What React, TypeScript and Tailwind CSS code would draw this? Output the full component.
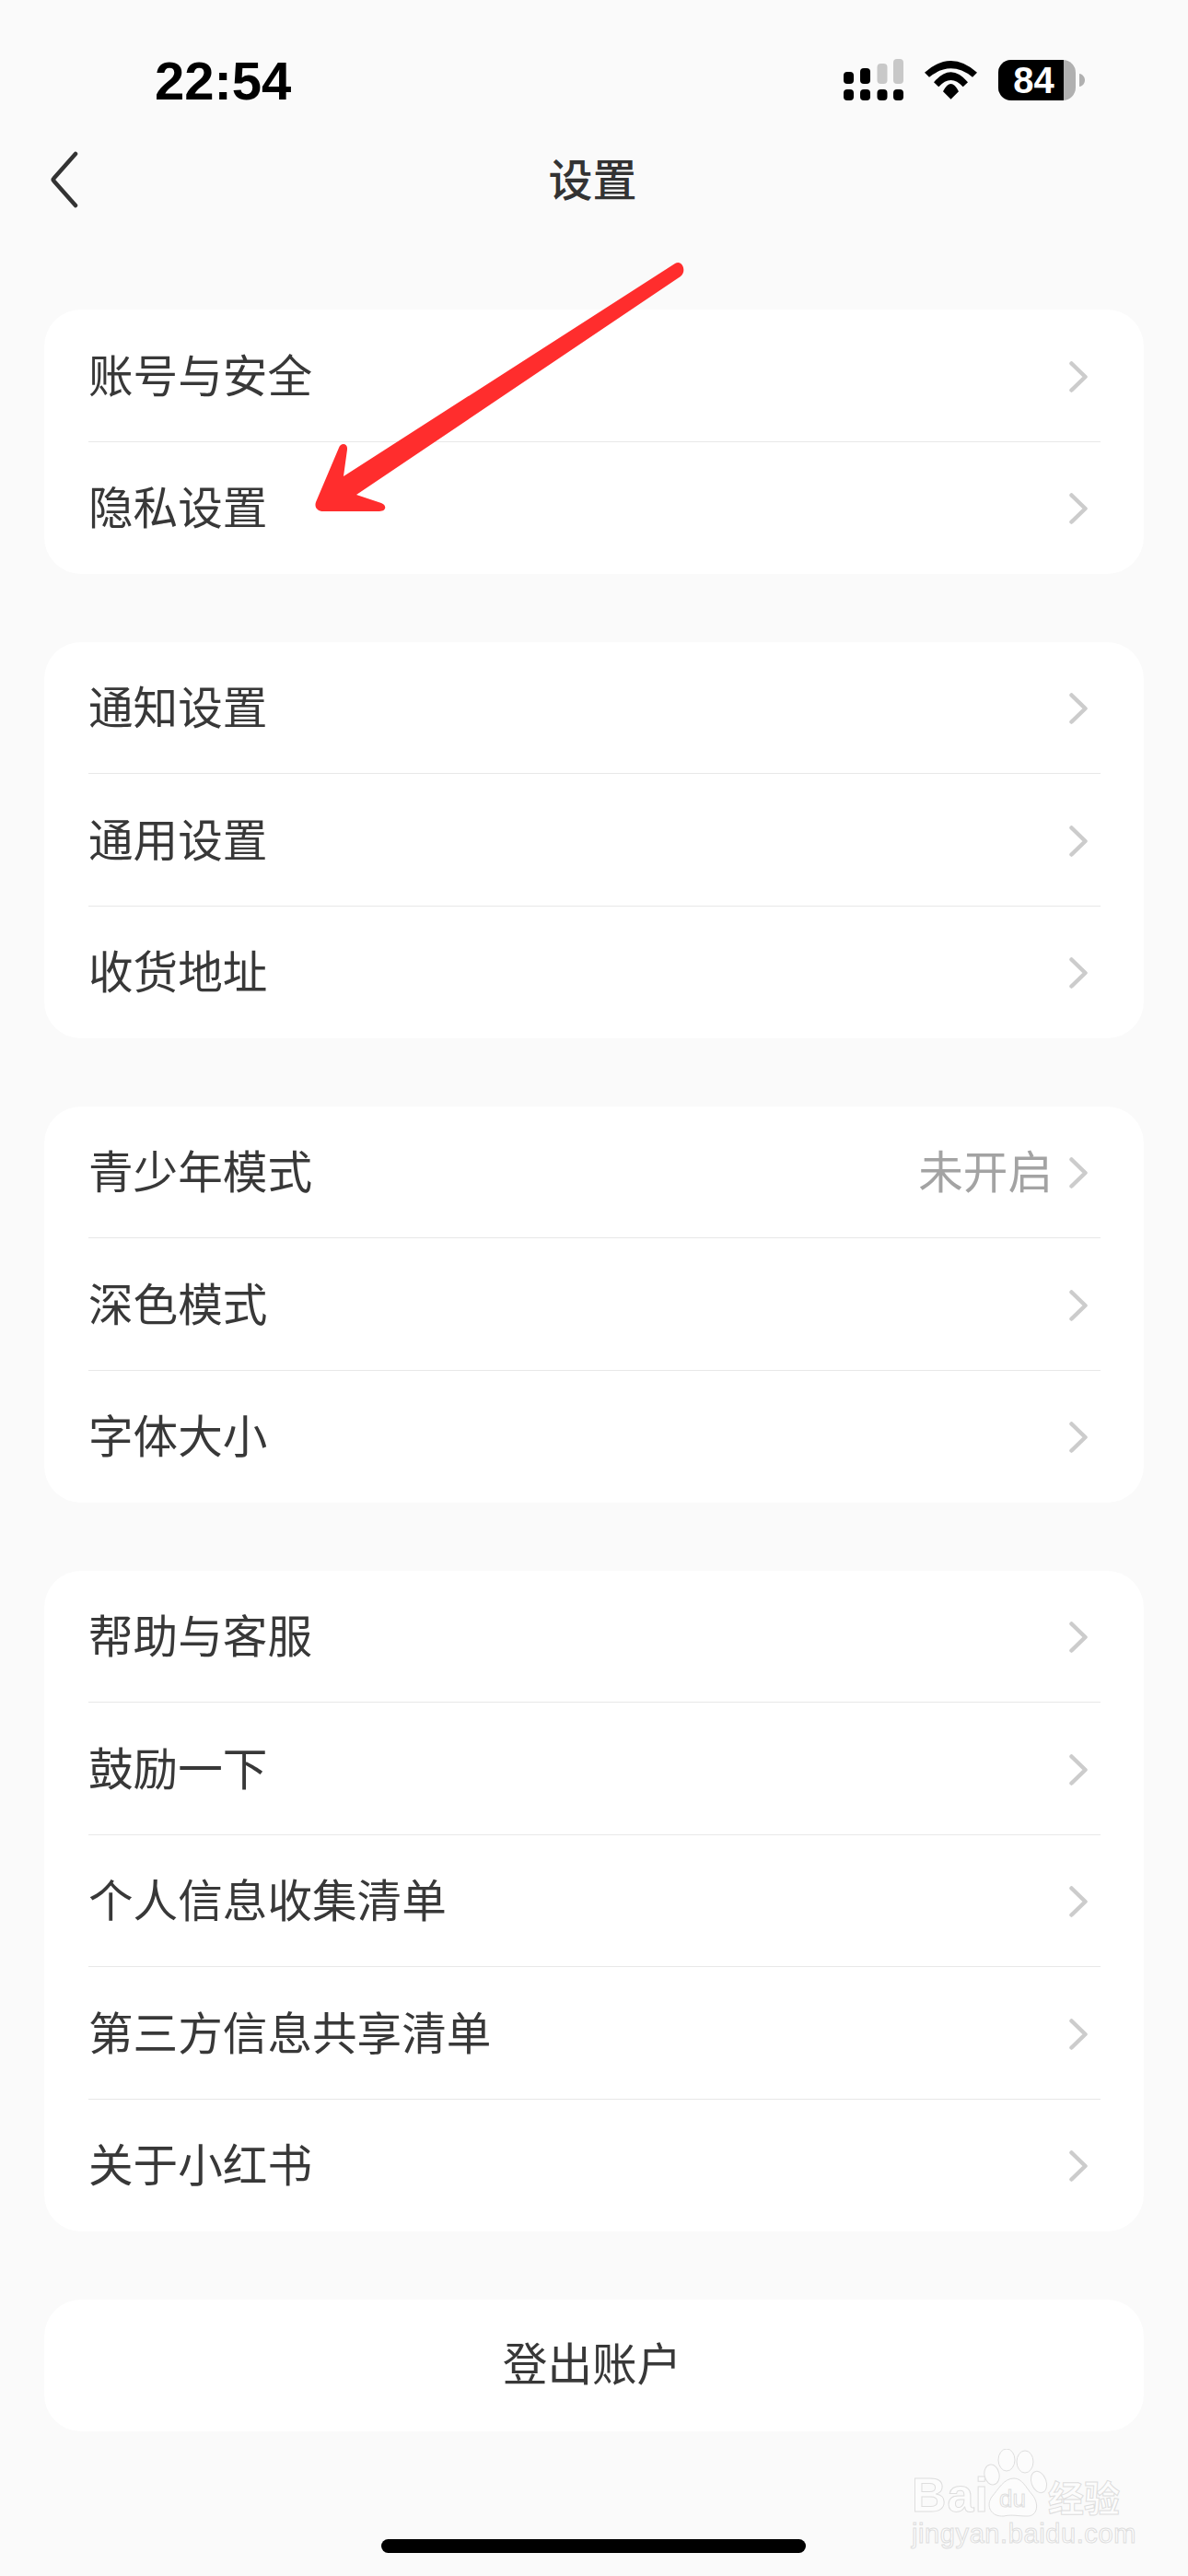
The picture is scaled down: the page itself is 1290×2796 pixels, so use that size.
const CJK = "font-['Noto_Sans_CJK_SC','Liberation_Sans',sans-serif]";

function Chevron() {
  return (
    <svg width="20" height="34" viewBox="0 0 20 34" fill="none" className="mt-[2px] shrink-0">
      <path d="M2.5 2.5L17.5 17L2.5 31.5" stroke="#cccccc" strokeWidth="4.5" strokeLinecap="round" strokeLinejoin="round" />
    </svg>
  );
}

function Row({ label, value, divider }: { label: string; value?: string; divider?: boolean }) {
  return (
    <div className="relative flex h-[143.5px] items-center pl-[48px] pr-[61px]">
      <span className="mb-[5px] flex-1 text-[48.6px] leading-none text-[#383838]">{label}</span>
      {value && <span className="mb-[5px] mr-[18px] text-[48.6px] leading-none text-[#a3a3a3]">{value}</span>}
      <Chevron />
      {divider && <div className="absolute bottom-0 left-[48px] right-[47px] h-px bg-[#e8e8e8]" />}
    </div>
  );
}

function Group({ rows }: { rows: { label: string; value?: string }[] }) {
  return (
    <div className="overflow-hidden rounded-[40px] bg-white">
      {rows.map((r, i) => (
        <Row key={r.label} label={r.label} value={r.value} divider={i < rows.length - 1} />
      ))}
    </div>
  );
}

function Signal() {
  return (
    <svg width="65" height="45" viewBox="0 0 65 45">
      <rect x="0" y="14" width="11" height="13" rx="4" fill="#000" />
      <rect x="18" y="10" width="11" height="17" rx="4" fill="#000" />
      <rect x="36.5" y="5" width="11" height="22" rx="4" fill="#c8c8c8" />
      <rect x="54" y="0" width="11" height="27" rx="4" fill="#c8c8c8" />
      <rect x="0" y="33" width="11" height="12" rx="4" fill="#000" />
      <rect x="18" y="33" width="11" height="12" rx="4" fill="#000" />
      <rect x="36.5" y="33" width="11" height="12" rx="4" fill="#000" />
      <rect x="54" y="33" width="11" height="12" rx="4" fill="#000" />
    </svg>
  );
}

function Wifi() {
  return (
    <svg width="57" height="42" viewBox="0 0 57 42" fill="#000">
      <path d="M0 12.7Q28.5 -12.7 57 12.7L52 17.7Q28.5 -1 5 17.7Z" />
      <path d="M10 23.3Q28.5 1.3 47 23.3L41.7 28.3Q28.5 13.7 15.3 28.3Z" />
      <path d="M20 33.3Q28.5 16.7 37 33.3L28.5 41.7Z" />
    </svg>
  );
}

function Battery() {
  return (
    <div className="flex items-center">
      <div className="h-[44px] w-[84px] overflow-hidden rounded-[14px] bg-[#b0b0b0]">
        <div className="flex h-full w-[71px] items-center justify-center pl-[6px] font-['Liberation_Sans',sans-serif] text-[40px] font-bold leading-none text-white bg-black">
          84
        </div>
      </div>
      <svg width="6" height="14" viewBox="0 0 6 14" className="ml-[4px]">
        <path d="M0 0C3.5 0.5 6 3.5 6 7C6 10.5 3.5 13.5 0 14Z" fill="#b0b0b0" />
      </svg>
    </div>
  );
}

function Arrow() {
  return (
    <svg className="absolute left-[330px] top-[275px]" width="420" height="290" viewBox="330 275 420 290">
      <path
        d="M733 286L373 517L377 488C378 481 370 480 368 486L343 545C341 551 345 555 351 555L412 555C420 555 420 548 414 546L387 537L739 300C746 295 741 281 733 286Z"
        fill="#ff2d2d"
      />
    </svg>
  );
}

function Watermark() {
  const outline = "text-[#fcfcfc] [-webkit-text-stroke:1px_#dedede]";
  return (
    <div className="absolute left-[985px] top-[2652px] h-[120px] w-[240px]">
      <svg className="absolute left-[83px] top-[6px]" width="70" height="76" viewBox="0 0 70 76" fill="#fcfcfc" stroke="#dedede" strokeWidth="1">
        <ellipse cx="25" cy="12" rx="9" ry="12" />
        <ellipse cx="45" cy="14" rx="9" ry="12" />
        <ellipse cx="9" cy="28" rx="8" ry="11" transform="rotate(-12 9 28)" />
        <ellipse cx="60" cy="36" rx="8" ry="12" transform="rotate(-20 60 36)" />
        <path d="M33 32C42 32 46 42 53 50C60 58 60 74 46 73C38 73 30 71 22 73C8 74 2 62 9 52C16 44 22 32 33 32Z" />
      </svg>
      <span className={`absolute left-[5px] top-[30px] font-['Liberation_Sans',sans-serif] text-[52px] font-bold leading-none tracking-[1px] ${outline}`}>Bai</span>
      <span className={`absolute left-[100px] top-[47px] font-['Liberation_Sans',sans-serif] text-[26px] leading-none ${outline}`}>du</span>
      <span className={`absolute left-[153px] top-[38px] text-[39px] font-bold leading-none ${outline}`}>经验</span>
      <span className={`absolute left-[5px] top-[84px] font-['Liberation_Sans',sans-serif] text-[29px] leading-none tracking-[0.6px] ${outline}`}>jingyan.baidu.com</span>
    </div>
  );
}

const groups = [
  [{ label: "账号与安全" }, { label: "隐私设置" }],
  [{ label: "通知设置" }, { label: "通用设置" }, { label: "收货地址" }],
  [{ label: "青少年模式", value: "未开启" }, { label: "深色模式" }, { label: "字体大小" }],
  [
    { label: "帮助与客服" },
    { label: "鼓励一下" },
    { label: "个人信息收集清单" },
    { label: "第三方信息共享清单" },
    { label: "关于小红书" },
  ],
];

export default function App() {
  return (
    <div className={`relative h-[2796px] w-[1290px] overflow-hidden bg-[#fafafa] ${CJK}`}>
      <div className="flex h-[140px] items-start justify-between pl-[168px] pr-[112px] pt-[64px]">
        <span className="pt-[1px] font-['Liberation_Sans',sans-serif] text-[58px] font-bold leading-[45px] text-black">22:54</span>
        <div className="flex items-center">
          <Signal />
          <div className="ml-[23px] mr-[23px]"><Wifi /></div>
          <Battery />
        </div>
      </div>
      <div className="relative flex h-[110px] items-center justify-center pr-[3px]">
        <svg className="absolute left-[54px] top-[24px]" width="32" height="62" viewBox="0 0 32 62" fill="none">
          <path d="M28 3L4.5 29.5C3.5 30.5 3.5 31.5 4.5 32.5L28 59" stroke="#333333" strokeWidth="4.5" strokeLinecap="round" strokeLinejoin="round" />
        </svg>
        <span className="mb-[7px] text-[48px] font-medium leading-none text-[#333333]">设置</span>
      </div>
      <div className="flex flex-col gap-[73.5px] px-[48px] pt-[86px]">
        {groups.map((rows) => (
          <Group key={rows[0].label} rows={rows} />
        ))}
        <div className="flex h-[143.5px] items-center justify-center rounded-[40px] bg-white pb-[7px] pr-[4px] text-[48.6px] leading-none text-[#383838]">
          登出账户
        </div>
      </div>
      <div className="ml-[414px] mt-[117px] h-[15px] w-[461px] rounded-full bg-black" />
      <Arrow />
      <Watermark />
    </div>
  );
}
